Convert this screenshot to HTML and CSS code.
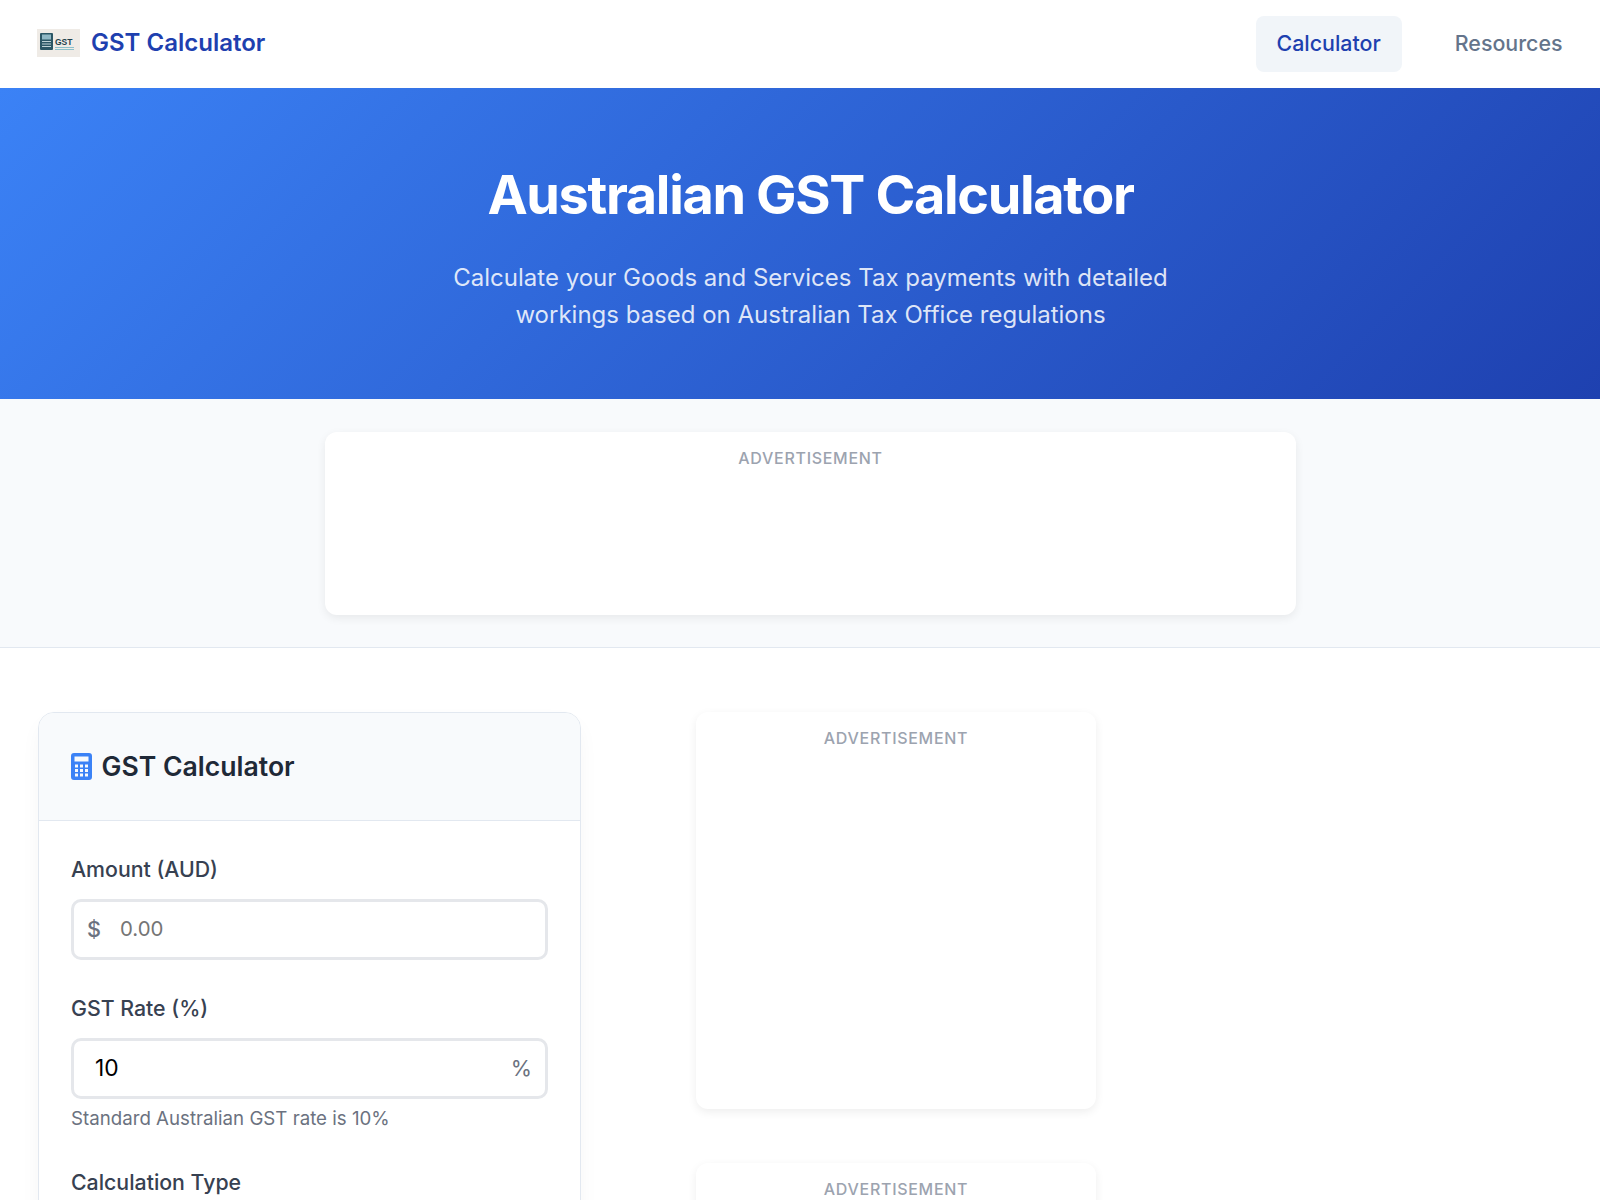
FILE: index.html
```html
<!DOCTYPE html>
<html lang="en">
<head>
<meta charset="utf-8">
<title>Australian GST Calculator</title>
<link rel="stylesheet" href="styles.css">
</head>
<body>
<div class="page">
  <header class="site-header">
    <a class="brand" href="#">
      <svg class="brand-logo" viewBox="0 0 43 28" aria-hidden="true">
        <rect width="43" height="28" fill="#efebe6"/>
        <rect x="3" y="4" width="13" height="17" rx="1" fill="#2b5665"/>
        <rect x="5" y="5.500" width="9" height="5" fill="#8fb7c4"/>
        <path d="M5 12.500h9M5 15h9M5 17.500h9" stroke="#cfe0e3" stroke-width=".9"/>
        <text x="18" y="15.500" class="brand-logo-text">GST</text>
        <path d="M18 18.500h19M18 20.500h19" stroke="#8cc0ca" stroke-width="1"/>
      </svg>
      <span class="brand-name">GST Calculator</span>
    </a>
    <nav class="site-nav">
      <a class="nav-link is-active" href="#">Calculator</a>
      <a class="nav-link" href="#">Resources</a>
    </nav>
  </header>

  <section class="hero">
    <h1 class="hero-title">Australian GST Calculator</h1>
    <p class="hero-text">Calculate your Goods and Services Tax payments with detailed workings based on Australian Tax Office regulations</p>
  </section>

  <section class="ad-strip">
    <div class="ad ad-banner"><span class="ad-label">ADVERTISEMENT</span></div>
  </section>

  <main class="main-grid">
    <section class="card">
      <header class="card-header">
        <svg class="card-icon" viewBox="0 0 21 27" aria-hidden="true">
          <path fill-rule="evenodd" d="M3 0h15a3 3 0 0 1 3 3v21a3 3 0 0 1-3 3H3a3 3 0 0 1-3-3V3a3 3 0 0 1 3-3zM3.500 3.500v5h14v-5zM4 11.500v3h3v-3zM9 11.500v3h3v-3zM14 11.500v3h3v-3zM4 16v3h3v-3zM9 16v3h3v-3zM14 16v3h3v-3zM4 20.500v3h3v-3zM9 20.500v3h3v-3zM14 20.500v3h3v-3z"/>
        </svg>
        <h2 class="card-title">GST Calculator</h2>
      </header>
      <div class="card-body">
        <div class="field">
          <label class="field-label">Amount (AUD)</label>
          <div class="input-box">
            <span class="input-prefix">$</span>
            <span class="input-placeholder">0.00</span>
          </div>
        </div>
        <div class="field field-rate">
          <label class="field-label">GST Rate (%)</label>
          <div class="input-box">
            <span class="input-value">10</span>
            <span class="input-suffix">%</span>
          </div>
          <p class="field-help">Standard Australian GST rate is 10%</p>
        </div>
        <div class="field">
          <label class="field-label">Calculation Type</label>
        </div>
      </div>
    </section>

    <aside class="ad-column">
      <div class="ad ad-side"><span class="ad-label">ADVERTISEMENT</span></div>
      <div class="ad ad-side"><span class="ad-label">ADVERTISEMENT</span></div>
    </aside>
  </main>
</div>
</body>
</html>
```

FILE: styles.css
```css
* { box-sizing: border-box; }
html, body { margin: 0; padding: 0; background: #fff; overflow: hidden; }
body { font-family: Inter, "Liberation Sans", sans-serif; color: #1e293b; }
.page { width: 1621px; height: 1200px; overflow: hidden; }

.site-header { height: 88px; display: flex; align-items: center; justify-content: space-between; padding: 0 37.500px 0 37px; background: #fff; }
.brand { display: flex; align-items: center; gap: 11px; text-decoration: none; margin-top: -3px; }
.brand-logo { width: 43px; height: 28px; display: block; }
.brand-logo-text { font: 700 8.500px "Liberation Sans", sans-serif; fill: #22404c; }
.brand-name { font-size: 24px; font-weight: 600; color: #1e40af; }
.site-nav { display: flex; gap: 32px; }
.nav-link { height: 56px; padding: 0 21px 2px; display: flex; align-items: center; border-radius: 8px; font-size: 21.400px; font-weight: 500; color: #64748b; text-decoration: none; }
.nav-link.is-active { background: #f1f5f9; color: #1e40af; }

.hero { height: 311px; padding-top: 73px; text-align: center; color: #fff; background: linear-gradient(135deg, #3b82f6 0%, #1e40af 100%); }
.hero-title { margin: 0; font-size: 54px; line-height: 67.200px; font-weight: 700; letter-spacing: -1.350px; }
.hero-text { width: 780px; margin: 30.300px auto 0; font-size: 24px; line-height: 37.400px; color: rgba(255,255,255,.85); }

.ad-strip { height: 249px; padding-top: 33px; background: #f8fafc; border-bottom: 1px solid #e2e8f0; }
.ad { background: #fff; border-radius: 12px; box-shadow: 0 3px 10px rgba(0,0,0,.07); text-align: center; }
.ad-banner { width: 971px; height: 183px; margin: 0 auto; padding-top: 16px; }
.ad-label { display: block; font-size: 16px; line-height: 20px; font-weight: 500; letter-spacing: .7px; color: #9ca3af; }

.main-grid { display: grid; grid-template-columns: 543px 400px; column-gap: 115px; padding: 64px 0 0 38px; align-items: start; }

.card { background: #fff; border: 1px solid #e2e8f0; border-radius: 16px; box-shadow: 0 10px 25px -5px rgba(0,0,0,.06); overflow: hidden; height: 900px; }
.card-header { height: 108px; display: flex; align-items: center; gap: 9.500px; padding: 0 32px; background: #f8fafc; border-bottom: 1px solid #e2e8f0; }
.card-icon { width: 21px; height: 27px; fill: #3b82f6; display: block; flex: none; margin-top: -1px; }
.card-title { margin: 0; padding-bottom: 2px; font-size: 26.600px; font-weight: 600; color: #1f2937; }
.card-body { padding: 33px 32px 0; }

.field { margin-bottom: 33px; }
.field-label { display: block; height: 30px; margin-bottom: 15px; font-size: 21.300px; line-height: 30px; font-weight: 500; color: #374151; }
.input-box { height: 61px; display: flex; align-items: center; padding: 0 13px 2px; border: 3px solid #e5e7eb; border-radius: 10px; font-size: 21.600px; background: #fff; }
.input-prefix { width: 33px; color: #6b7280; font-weight: 500; }
.input-placeholder { font-size: 20.400px; color: #757575; }
.input-value { flex: 1; padding: 0 0 1px 8px; font-size: 22.800px; color: #000; }
.input-suffix { color: #6b7280; }
.field-help { margin: 6px 0 0; font-size: 18.700px; line-height: 28px; color: #6b7280; }
.field-rate { margin-bottom: 34px; }

.ad-column { display: flex; flex-direction: column; gap: 54px; }
.ad-side { height: 397px; padding-top: 16px; }
```
